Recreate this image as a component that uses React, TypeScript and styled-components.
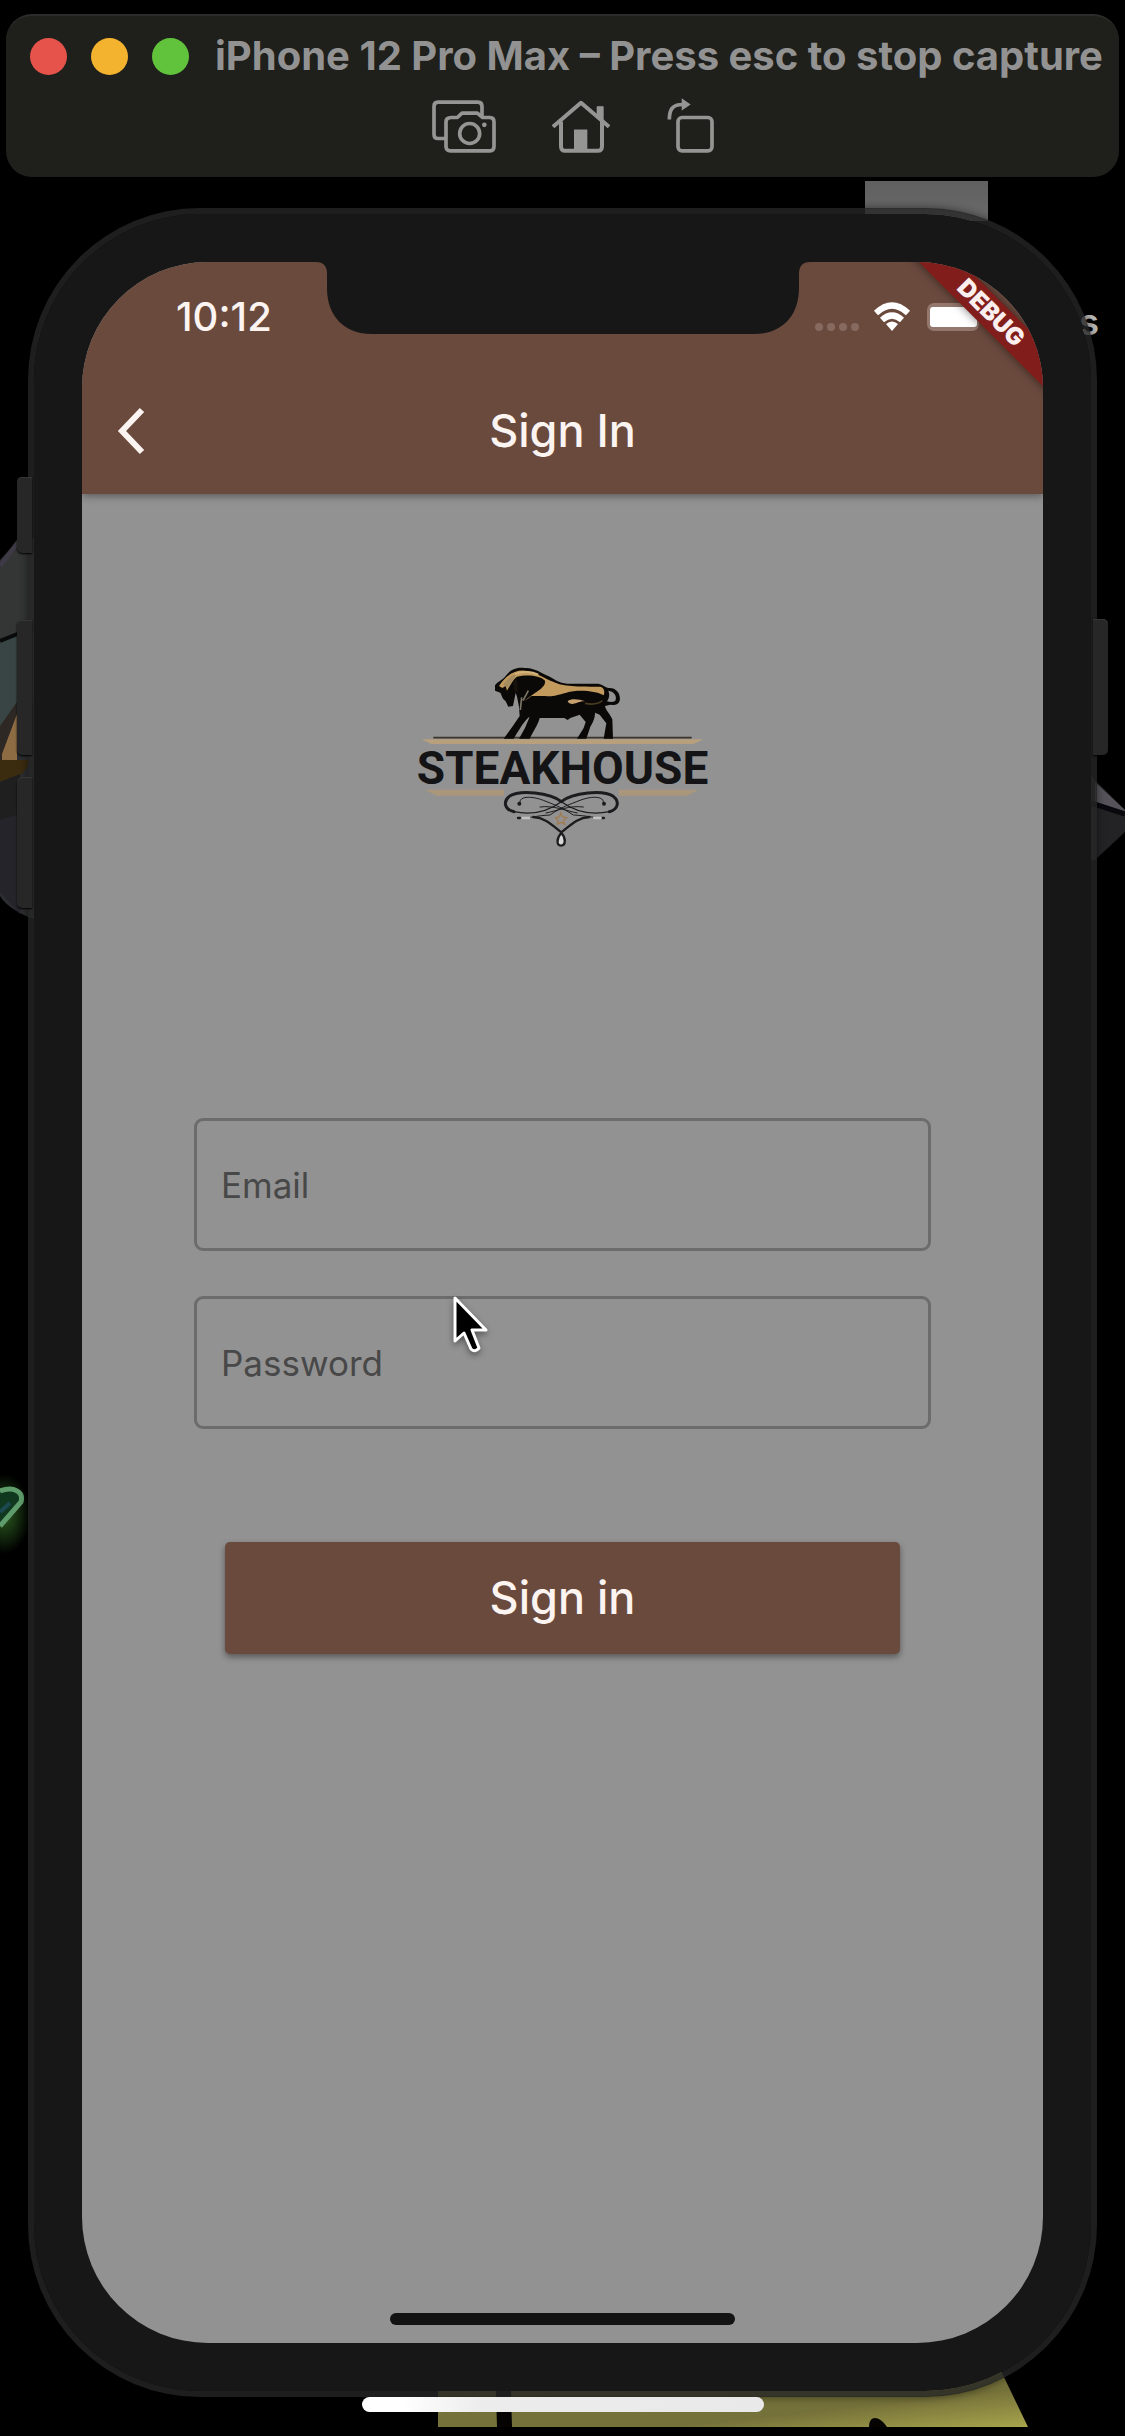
import React from "react";
import styled, { createGlobalStyle } from "styled-components";

const sans = `Inter, "Liberation Sans", sans-serif`;
const brown = "#6b4a3e";

const GlobalStyle = createGlobalStyle`
  * { box-sizing: border-box; }
  body { margin: 0; background: #000; font-family: ${sans}; }
  button, input { font-family: inherit; }
`;

const Desktop = styled.div`
  position: relative;
  min-height: 100vh;
  display: flex;
  flex-direction: column;
  overflow: hidden;
  background: #000;
  padding-bottom: 39px;
`;

/* Wallpaper fragments that peek out around the simulator */
const Art = styled.svg<{ $top?: number; $bottom?: number; $left?: number; $right?: number }>`
  position: absolute;
  display: block;
  top: ${(p) => (p.$top === undefined ? "auto" : `${p.$top}px`)};
  bottom: ${(p) => (p.$bottom === undefined ? "auto" : `${p.$bottom}px`)};
  left: ${(p) => (p.$left === undefined ? "auto" : `${p.$left}px`)};
  right: ${(p) => (p.$right === undefined ? "auto" : `${p.$right}px`)};
`;

const GreyPatch = styled.div`
  position: absolute;
  top: 181px;
  right: 137px;
  width: 123px;
  height: 40px;
  background: linear-gradient(#606060, #6a6a6a);
`;

const Stray = styled.span`
  position: absolute;
  top: 300px;
  right: 26px;
  font-size: 36px;
  line-height: 44px;
  font-weight: 600;
  color: #b8b8b8;
`;

const Toolbar = styled.header`
  position: relative;
  margin: 14px 6px 0;
  height: 163px;
  padding-top: 18px;
  border-radius: 26px;
  background: #1f1f1b;
  border-top: 2px solid #2c2c2a;
  display: flex;
  flex-direction: column;
  gap: 20px;
`;

const TitleRow = styled.div`
  display: flex;
  align-items: center;
  padding-left: 24px;
  height: 44px;
`;

const Lights = styled.div`
  display: flex;
  gap: 24px;
  margin-right: 26px;
`;

const Light = styled.button<{ $color: string }>`
  width: 37px;
  height: 37px;
  padding: 0;
  border: 0;
  border-radius: 50%;
  background: ${(p) => p.$color};
`;

const WindowTitle = styled.h1`
  margin: 0;
  font-size: 40px;
  line-height: 44px;
  font-weight: 700;
  white-space: nowrap;
  color: #929292;
`;

const Tools = styled.div`
  display: flex;
  justify-content: center;
  gap: 56px;
  padding-left: 20px;
`;

const IconButton = styled.button`
  padding: 0;
  border: 0;
  background: none;
  color: #959593;
  svg { display: block; }
`;

const Phone = styled.main`
  position: relative;
  flex: 1;
  display: flex;
  margin: 31px 28px 0;
  padding: 48px;
  border: 6px solid rgba(38, 38, 38, 0.8);
  border-radius: 172px;
  background: #171717;
  background-clip: padding-box;
  box-shadow: 0 0 8px rgba(0, 0, 0, 0.5);
`;

const SideKey = styled.i<{ $side: "left" | "right"; $top: number; $height: number }>`
  position: absolute;
  ${(p) => p.$side}: -17px;
  top: ${(p) => p.$top}px;
  width: 15px;
  height: ${(p) => p.$height}px;
  background: #272727;
  border-radius: ${(p) => (p.$side === "left" ? "5px 0 0 5px" : "0 5px 5px 0")};
  box-shadow: inset 0 1px 0 #363636, 0 1px 2px #000;
`;

const Screen = styled.div`
  position: relative;
  flex: 1;
  display: flex;
  flex-direction: column;
  align-items: stretch;
  overflow: hidden;
  border-radius: 126px;
  background: #929292;
`;

const Notch = styled.svg`
  position: absolute;
  top: 0;
  left: 50%;
  margin-left: -247px;
  display: block;
`;

const TopArea = styled.div`
  background: ${brown};
  box-shadow: 0 2px 8px rgba(0, 0, 0, 0.4);
`;

const StatusBar = styled.div`
  height: 106px;
  display: flex;
  justify-content: space-between;
  padding: 32px 60px 0 94px;
`;

const Clock = styled.time`
  font-size: 40px;
  line-height: 46px;
  font-weight: 500;
  color: #fbf4f1;
`;

const Indicators = styled.svg`
  display: block;
`;

const AppBar = styled.div`
  height: 126px;
  display: grid;
  grid-template-columns: 1fr auto 1fr;
  align-items: center;
`;

const BackButton = styled.button`
  justify-self: start;
  margin-left: 32px;
  padding: 0;
  border: 0;
  background: none;
  svg { display: block; }
`;

const ScreenTitle = styled.h2`
  margin: 0;
  font-size: 45px;
  line-height: 56px;
  font-weight: 500;
  color: #fbf4f1;
`;

const Banner = styled.div`
  position: absolute;
  top: 36px;
  right: -51px;
  width: 206px;
  height: 30px;
  transform: rotate(45deg);
  background: #811e1b;
  box-shadow: 0 0 10px rgba(0, 0, 0, 0.5);
  color: #fbeeee;
  font-size: 24px;
  line-height: 30px;
  font-weight: 900;
  text-align: center;
`;

const Body = styled.div`
  flex: 1;
  display: flex;
  flex-direction: column;
  align-items: center;
  padding: 166px 112px 18px;
`;

const Logo = styled.div`
  display: flex;
  flex-direction: column;
  align-items: center;
  svg { display: block; overflow: visible; }
`;

const LogoName = styled.div`
  font-family: Roboto, "Liberation Sans", sans-serif;
  font-size: 46px;
  line-height: 46px;
  font-weight: 700;
  color: #141416;
`;

const Form = styled.form`
  width: 100%;
  margin-top: 270px;
  display: flex;
  flex-direction: column;
  gap: 45px;
`;

const Field = styled.div`
  display: grid;
  height: 133px;
  > * { grid-area: 1 / 1; }
`;

const TextBox = styled.input`
  min-width: 0;
  width: 100%;
  height: 100%;
  padding: 0 26px;
  border: 3px solid #6c6c6c;
  border-radius: 9px;
  background: transparent;
  color: #222;
  font-size: 35px;
  outline: none;
  &:not(:placeholder-shown) + label { display: none; }
`;

const FieldLabel = styled.label`
  align-self: center;
  justify-self: start;
  padding-left: 27px;
  font-size: 35px;
  line-height: 44px;
  color: #484848;
  pointer-events: none;
`;

const SubmitButton = styled.button`
  margin: 68px 31px 0;
  height: 112px;
  border: 0;
  border-radius: 5px;
  background: ${brown};
  color: #fbf4f1;
  font-size: 45px;
  line-height: 56px;
  font-weight: 500;
  box-shadow: 0 3px 6px rgba(0, 0, 0, 0.4);
`;

const InnerHomeBar = styled.div`
  width: 345px;
  height: 12px;
  margin-top: auto;
  border-radius: 6px;
  background: #131313;
`;

const Cursor = styled.svg`
  position: absolute;
  top: 1295px;
  left: 452px;
  filter: drop-shadow(0 3px 3px rgba(0, 0, 0, 0.4));
`;

const OuterHomeBar = styled.div`
  position: absolute;
  bottom: 24px;
  left: 50%;
  width: 402px;
  height: 15px;
  margin-left: -201px;
  border-radius: 8px;
  background: linear-gradient(90deg, #fff 10%, #ececec 30%, #e9e9e9);
`;

const CameraIcon = () => (
  <svg width="64" height="55" viewBox="22 12 192 164" fill="none" stroke="currentColor" strokeWidth="11" strokeLinejoin="round">
    <path d="M64 133H40Q28 133 28 120V37Q28 24 40 24H160Q172 24 172 37V66" />
    <path d="M80 70H98L112 57H158L174 70H196Q208 70 208 83V157Q208 170 196 170H78Q64 170 64 157V83Q64 70 80 70Z" />
    <circle cx="135" cy="118" r="30" />
    <circle cx="179" cy="92" r="7" fill="currentColor" stroke="none" />
  </svg>
);

const HomeIcon = () => (
  <svg width="58" height="55" viewBox="384 12 174 164" fill="none" stroke="currentColor" strokeWidth="12" strokeLinejoin="round">
    <path d="M387 98L471 26L555 98" />
    <path d="M411 82V156Q411 170 424 170H521Q534 170 534 156V82" />
    <path d="M520 66V38H537V78" fill="currentColor" strokeWidth="4" />
    <path d="M450 170V106H490V170Z" fill="currentColor" stroke="none" />
  </svg>
);

const RotateIcon = () => (
  <svg width="48" height="55" viewBox="720 12 144 164" fill="none" stroke="currentColor" strokeWidth="11">
    <rect x="756" y="70" width="102" height="100" rx="12" />
    <path d="M730 76C730 46 739 31 770 31" />
    <path d="M767 12L794 31L767 49Z" fill="currentColor" stroke="none" />
  </svg>
);

const Bull = () => (
  <svg width="292" height="85" viewBox="-204 0 876 255">
    <path d="M-155 233H620" stroke="#3a342c" strokeWidth="5" />
    <path d="M-190 238H655L625 252H-160Z" fill="#b9a07c" />
    <path
      d="M30 76C40 62 54 60 62 48C78 26 98 22 118 24C148 22 170 40 190 48C214 62 230 72 252 71H340C354 74 362 84 374 84C396 84 408 104 404 122C400 134 390 137 376 134L360 138C362 150 374 160 382 178L384 236H356L364 190L344 164L330 158C330 176 322 190 316 200L304 236H276L296 204L302 186L284 164L256 174L248 180L238 174L164 174C158 196 146 212 134 236H102L120 204L134 170C120 180 110 196 86 236H56L82 200L104 168L102 140L96 110L92 98L84 138L70 140L62 124L54 116L46 98L30 92Z"
      fill="#0a0908"
    />
    <path d="M42 78C58 52 84 30 118 32C146 32 176 54 206 66C232 78 258 80 346 80C358 84 360 94 356 106C330 92 280 88 244 98C214 106 206 110 180 108H140C134 112 126 118 118 124C140 100 184 86 180 62C164 44 120 44 96 50C84 58 74 78 66 92L62 78L52 84Z" fill="#c39a5e" />
    <path d="M54 74C66 56 80 46 94 42L84 62L70 84Z" fill="#a58b60" />
    <path d="M96 52L84 70L90 96L98 98Z" fill="#17120c" />
    <path d="M90 42C112 32 142 36 160 44" fill="none" stroke="#d3b27d" strokeWidth="6" />
    <path d="M110 112L106 150M130 92L114 122" stroke="#7c7667" strokeWidth="5" />
    <path d="M370 92C386 94 396 106 392 120C388 128 376 126 366 124C374 112 374 104 370 92Z" fill="#929292" />
    <path d="M248 124C258 114 284 118 300 124C280 124 280 130 262 132C256 132 250 130 248 124Z" fill="#c7a270" />
    <path d="M300 130C320 134 340 132 352 122" fill="none" stroke="#4b3b22" strokeWidth="5" />
  </svg>
);

const Ornament = () => (
  <svg width="292" height="57" viewBox="-219 18 876 171" fill="none" stroke="#1c1c1f" strokeLinecap="round">
    <path d="M-195 14H42V32H-160Z M385 14H625L592 32H388Z" fill="#aa977b" stroke="none" />
    <path d="M214 50C180 22 88 14 58 34C38 50 44 74 72 80" strokeWidth="9" />
    <path d="M214 50C248 22 340 14 370 34C390 50 384 74 358 80" strokeWidth="9" />
    <path d="M72 80C120 90 170 82 214 50C258 82 308 90 358 80" strokeWidth="4" />
    <path d="M90 56C84 30 130 34 160 46C190 58 214 66 250 90C290 92 330 100 322 100" strokeWidth="3" />
    <path d="M340 56C346 30 300 34 270 46C240 58 214 66 180 90C140 92 110 100 104 100" strokeWidth="3" />
    <path d="M130 96C168 98 190 124 214 142C238 124 260 98 298 96" strokeWidth="7" />
    <path d="M150 66C190 60 230 78 262 84M280 66C240 60 200 78 168 84" strokeWidth="3" />
    <circle cx="88" cy="56" r="6" fill="#1c1c1f" stroke="none" />
    <circle cx="342" cy="56" r="6" fill="#1c1c1f" stroke="none" />
    <path d="M84 99H90M336 99H342" strokeWidth="7" />
    <path d="M98 99H118M312 99H332" stroke="#c2c2c2" strokeWidth="7" />
    <path d="M212 84L218 96L230 98L220 106L224 118L213 112L202 118L204 106L196 98L208 96Z" stroke="#a07c50" strokeWidth="4" />
    <path d="M214 144C200 158 198 182 213 182C228 182 228 158 214 144Z" fill="#d6d6d6" strokeWidth="7" />
  </svg>
);

export default function App() {
  return (
    <Desktop>
      <GlobalStyle />

      <Art $top={530} $left={0} width="36" height="400" viewBox="0 0 36 400" aria-hidden="true">
        <path d="M0 30L20 8H36V390C20 384 6 376 0 366Z" fill="#2c2d30" />
        <path d="M0 38L20 16H36V110L0 116Z" fill="#343635" />
        <path d="M0 36L20 10" stroke="#3d3a45" strokeWidth="5" />
        <path d="M0 112L36 100V170L14 190L0 200Z" fill="#394544" />
        <path d="M0 111L20 103" stroke="#090b0b" strokeWidth="4" />
        <path d="M0 196L17 172V230H0Z" fill="#2d2824" />
        <path d="M2 224L17 184V230H2Z" fill="#8e6c43" />
        <path d="M0 230H32L22 244L0 252Z" fill="#3b2c10" />
        <path d="M0 252L20 244V286L0 290Z" fill="#1f1f1f" />
        <path d="M0 290L20 284V384L0 362Z" fill="#26242b" />
      </Art>
      <Art $top={776} $right={0} width="34" height="90" viewBox="0 0 34 90" aria-hidden="true">
        <path d="M0 0L34 34V56L4 84H0Z" fill="#232326" />
        <path d="M4 6L34 34V36L4 26Z" fill="#56545a" />
        <path d="M0 27L34 38" stroke="#08080d" strokeWidth="5" />
      </Art>
      <Art $top={1470} $left={0} width="34" height="90" viewBox="0 0 34 90" aria-hidden="true">
        <defs>
          <radialGradient id="glow">
            <stop offset="0" stopColor="#2c5c20" />
            <stop offset="1" stopColor="#000" />
          </radialGradient>
        </defs>
        <ellipse cx="4" cy="44" rx="27" ry="40" fill="url(#glow)" />
        <path d="M0 21C14 16 24 22 21 32L0 56" fill="#10381f" stroke="#5f9c6c" strokeWidth="5" />
        <path d="M0 42L10 33" stroke="#1d4a52" strokeWidth="4" />
      </Art>
      <Art $bottom={9} $right={90} width="600" height="66" viewBox="0 0 600 66" aria-hidden="true">
        <defs>
          <linearGradient id="paper" x1="0" y1="0" x2="1" y2="1">
            <stop offset="0.7" stopColor="#75713a" />
            <stop offset="1" stopColor="#a8a54c" />
          </linearGradient>
        </defs>
        <path d="M3 0H560L567 12L593 66H3Z" fill="url(#paper)" />
        <path d="M60 0H75L77 66H62Z" fill="#050402" />
        <path d="M434 66C434 54 444 54 452 66Z" fill="#050402" />
      </Art>
      <GreyPatch />
      <Stray>s</Stray>

      <Toolbar>
        <TitleRow>
          <Lights>
            <Light $color="#e5534b" aria-label="Close" />
            <Light $color="#f4b32f" aria-label="Minimize" />
            <Light $color="#61c33c" aria-label="Zoom" />
          </Lights>
          <WindowTitle>iPhone 12 Pro Max – Press esc to stop capture</WindowTitle>
        </TitleRow>
        <Tools>
          <IconButton aria-label="Screenshot"><CameraIcon /></IconButton>
          <IconButton aria-label="Home"><HomeIcon /></IconButton>
          <IconButton aria-label="Rotate"><RotateIcon /></IconButton>
        </Tools>
      </Toolbar>

      <Phone>
        <SideKey $side="left" $top={263} $height={76} />
        <SideKey $side="left" $top={406} $height={135} />
        <SideKey $side="left" $top={563} $height={131} />
        <SideKey $side="right" $top={405} $height={136} />
        <Screen>
          <TopArea>
            <StatusBar>
              <Clock>10:12</Clock>
              <Indicators width="168" height="46" viewBox="814 294 168 46" fill="#fff" aria-hidden="true">
                <g fill="#876a5f">
                  <circle cx="818" cy="327" r="4" />
                  <circle cx="830" cy="327" r="4" />
                  <circle cx="842" cy="327" r="4" />
                  <circle cx="854" cy="327" r="4" />
                </g>
                <g fill="none" stroke="#fff" strokeWidth="6">
                  <path d="M875 313Q891 298 907 313" />
                  <path d="M881 320Q891 311 901 320" />
                </g>
                <path d="M885 324Q891 319 897 324L891 331Z" />
                <rect x="926" y="303" width="52" height="28" rx="7" fill="#94786e" />
                <rect x="929" y="307" width="47" height="20" rx="3" />
              </Indicators>
            </StatusBar>
            <AppBar>
              <BackButton aria-label="Back">
                <svg width="36" height="48" viewBox="0 0 36 48" fill="none" stroke="#fbf4f1" strokeWidth="6">
                  <path d="M28 3L8 24L28 45" />
                </svg>
              </BackButton>
              <ScreenTitle>Sign In</ScreenTitle>
            </AppBar>
          </TopArea>
          <Banner>DEBUG</Banner>
          <Notch width="494" height="72" viewBox="0 0 494 72" aria-hidden="true">
            <path d="M0 0H494Q483 0 483 12V26C483 54 466 72 438 72H56C28 72 11 54 11 26V12Q11 0 0 0Z" fill="#171717" />
          </Notch>
          <Body>
            <Logo>
              <Bull />
              <LogoName>STEAKHOUSE</LogoName>
              <Ornament />
            </Logo>
            <Form onSubmit={(e) => e.preventDefault()}>
              <Field>
                <TextBox id="email" type="email" placeholder=" " />
                <FieldLabel htmlFor="email">Email</FieldLabel>
              </Field>
              <Field>
                <TextBox id="password" type="password" placeholder=" " />
                <FieldLabel htmlFor="password">Password</FieldLabel>
              </Field>
              <SubmitButton type="submit">Sign in</SubmitButton>
            </Form>
            <InnerHomeBar />
          </Body>
        </Screen>
      </Phone>

      <Cursor width="40" height="60" viewBox="0 0 40 60" aria-hidden="true">
        <path d="M3 3V46L12 38L19 54Q23 58 27 53L20 35H34Z" fill="#000" stroke="#fff" strokeWidth="3" strokeLinejoin="round" />
      </Cursor>
      <OuterHomeBar />
    </Desktop>
  );
}
